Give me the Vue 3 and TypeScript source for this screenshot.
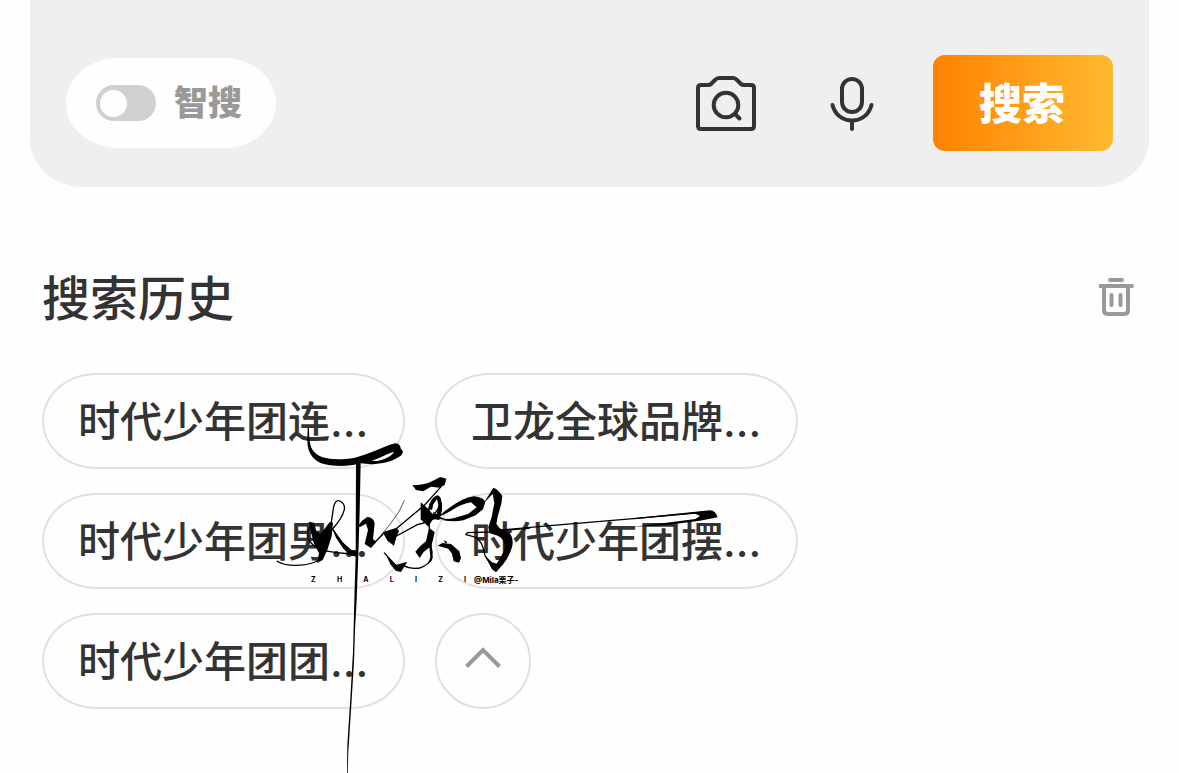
<script setup lang="ts">
import { ref } from 'vue'

const smart = ref<boolean>(false)
const history: string[] = ['时代少年团连...', '卫龙全球品牌...', '时代少年团男...', '时代少年团摆...', '时代少年团团...']
const letters: string[] = ['Z', 'H', 'A', 'L', 'I', 'Z', 'I']
</script>

<template>
  <main class="page">
    <header class="search-panel">
      <label class="smart">
        <input v-model="smart" class="switch" type="checkbox" role="switch" />
        <span>智搜</span>
      </label>
      <div class="actions">
        <button class="icon-btn camera" type="button" aria-label="拍照搜索">
          <svg width="60" height="60" viewBox="0 0 60 60" fill="none" stroke="#333" stroke-width="4" stroke-linecap="round" stroke-linejoin="round">
            <path d="M2 15Q2 12 5 12H12Q14 12 15 11L19 7Q21 5 23 5H37Q39 5 41 7L45 11Q46 12 48 12H55Q58 12 58 15V53Q58 56 55 56H5Q2 56 2 53Z" />
            <circle cx="30" cy="32" r="12.3" />
            <path d="M39 41L43.500 45.500" />
          </svg>
        </button>
        <button class="icon-btn mic" type="button" aria-label="语音搜索">
          <svg width="44" height="60" viewBox="0 0 44 60" fill="none" stroke="#333" stroke-width="4" stroke-linecap="round">
            <rect x="12" y="6" width="20" height="33" rx="10" />
            <path d="M2.500 32C5 42 13 47.500 22 47.500S39 42 41.500 32M22 48V56" />
          </svg>
        </button>
        <button class="submit" type="button">搜索</button>
      </div>
    </header>

    <section class="history">
      <div class="title-row">
        <h1>搜索历史</h1>
        <button class="icon-btn" type="button" aria-label="清空搜索历史">
          <svg width="38" height="40" viewBox="0 0 38 40" fill="none" stroke="#999" stroke-width="4" stroke-linecap="round" stroke-linejoin="round">
            <path d="M11 2H23M1 8H33M5 9V32Q5 36 9 36H25Q29 36 29 32V9M12.500 17V27M21.500 17V27" />
          </svg>
        </button>
      </div>
      <div class="chips">
        <button v-for="item in history" :key="item" class="chip" type="button">{{ item }}</button>
        <button class="chip fold" type="button" aria-label="收起">
          <svg width="36" height="24" viewBox="0 0 36 24" fill="none" stroke="#999" stroke-width="4">
            <path d="M1.500 20.500L18 4L34.500 20.500" />
          </svg>
        </button>
      </div>
    </section>

    <div class="signature">
      <svg class="ink" width="450" height="348" viewBox="0 0 1350 1044" aria-hidden="true">
        <g>
          <path d="M113 8L117 9C117 40 119 60 128 75C148 105 200 107 255 98C300 87 340 64 376 55Q391 57 392 70L399 80L395 90Q376 105 350 112C325 118 300 119 271 115C240 124 200 126 165 118C133 111 112 86 112 48Z" />
          <path class="gap" d="M304 107C330 101 348 86 372 81C366 93 345 103 322 108Z" />
          <path d="M258 112L272 112L269 260L265 390L260 525L255 615L252 710L244 840L235 980L233 1044H231L232 960L241 820L249 680L253 525L257 390Z" />
          <path d="M116 290L132 293L139 318L150 327L164 311L179 291L189 293L185 334L172 375L158 405L141 414L147 384L131 354Z" />
          <path class="line" d="M183 298L191 244Q198 222 210 228Q228 239 222 257Q216 280 190 309L174 332M187 311L218 355L260 391M20 408C48 426 102 424 135 411Q155 402 158 378M122 304C103 327 113 355 150 373C182 384 220 384 261 389" />
          <path d="M187 311L210 342L239 375L260 376V395L240 391L219 370L198 338Z" />
          <path d="M264 303L276 287L293 275Q313 279 314 296L309 342L319 351L303 369L284 357L294 314L288 296L270 306Z" />
          <path class="line" d="M304 363L340 326" />
          <path class="hair" d="M330 335L363 294Q391 260 403 226" />
        </g>
        <g transform="translate(330 120)">
          <path d="M97 61Q132 60 153 50L181 36L199 41L194 60L178 68L153 65L129 79L108 75Z" />
          <path class="line" d="M184 64L134 120L37 201M44 216L112 179C150 172 182 151 211 134M145 175L177 127Q188 97 171 93Q153 100 147 130L148 208M160 142Q176 167 220 164Q267 160 305 125" />
          <path d="M165 95Q178 88 184 108Q189 126 183 150L170 149L175 119L171 102L160 118L156 135L145 132Q150 104 165 95Z" />
          <path d="M8 202L50 188L57 199L49 217L42 242L23 228Z" />
          <path d="M122 112L146 133L157 146L184 147L178 165L159 162L145 185L134 174L122 163Z" />
          <path d="M190 142Q245 98 282 94Q311 97 316 111L309 133L287 151L250 166Q218 172 187 165L220 160L264 147L290 127L273 112Q237 119 211 139L186 151Z" />
          <path d="M148 190L164 201L159 225L153 244L131 261L119 279L106 260L122 242L138 229L143 207Z" />
          <path class="line" d="M151 225L156 279Q146 300 119 309Q90 313 72 302M12 263L48 302L78 294" />
          <path d="M151 225L158 260L156 285L143 298L151 277L148 244Z" />
          <path d="M17 267L31 282L52 303L82 290L63 321L47 317L31 298Z" />
          <path d="M173 242L187 234L213 237L238 259L243 279L237 293L221 289L216 266L205 251Z" />
          <path d="M193 226L199 229L201 235L194 233Z" />
          <path d="M309 118L340 68Q354 72 367 93L364 116L353 155L349 177L359 190L387 202Q403 221 396 247Q387 276 370 297L348 322L336 313L315 272L336 292L350 296L371 260Q381 225 353 212L328 204L325 187L335 156L343 114L338 87L326 99Z" />
          <path class="line" d="M340 310L315 272Q308 227 287 218M291 218L258 209L262 203L330 201L450 189" />
        </g>
        <g transform="translate(690 195)">
          <path class="line" d="M0 120L150 107L400 86L625 65" />
          <path d="M400 85L630 61Q646 61 653 82L600 92L500 105L400 110L500 98L586 87L600 78L586 71L400 88Z" />
        </g>
      </svg>
      <div class="caption">
        <span class="latin"><span v-for="(letter, i) in letters" :key="i">{{ letter }}</span></span>
        <span>@Mila栗子-</span>
      </div>
    </div>
  </main>
</template>

<style>
body {
  margin: 0;
  background: #fefefe;
}
</style>

<style scoped>
.page {
  position: relative;
  overflow: hidden;
  padding-bottom: 64px;
  font-family: Inter, "Noto Sans CJK SC", sans-serif;
  color: #333;
}

button {
  margin: 0;
  padding: 0;
  border: 0;
  background: none;
  font-family: inherit;
  color: inherit;
  cursor: pointer;
}

svg {
  display: block;
}

.search-panel {
  display: flex;
  align-items: center;
  justify-content: space-between;
  margin: 0 30px;
  padding: 55px 36px 36px;
  border-radius: 0 0 52px 52px / 0 0 48px 48px;
  background: #efefef;
}

.smart {
  display: flex;
  align-items: center;
  gap: 18px;
  box-sizing: border-box;
  height: 90px;
  padding: 0 34px 0 30px;
  border-radius: 52px / 45px;
  background: #fefefe;
  color: #999;
  font-size: 34px;
  font-weight: 900;
  line-height: 48px;
}

.switch {
  appearance: none;
  display: flex;
  align-items: center;
  box-sizing: border-box;
  width: 60px;
  height: 36px;
  margin: 0;
  padding: 0 4px;
  border-radius: 18px;
  background: #d0d0d0;
}

.switch::before {
  content: "";
  width: 27px;
  height: 27px;
  border-radius: 50%;
  background: #fefefe;
}

.switch:checked {
  justify-content: flex-end;
  background: #ff8200;
}

.actions {
  display: flex;
  align-items: center;
}

.camera {
  margin-right: 74px;
}

.mic {
  margin-right: 59px;
}

.submit {
  width: 180px;
  height: 96px;
  padding: 2px 2px 0 0;
  border-radius: 12px;
  background: linear-gradient(90deg, #ff8200, #ffba30);
  color: #fff;
  font-size: 43px;
  font-weight: 900;
  line-height: 64px;
}

.history {
  padding: 75px 42px 0;
}

.title-row {
  display: flex;
  align-items: center;
  justify-content: space-between;
  height: 72px;
}

h1 {
  margin: 0;
  padding-top: 2px;
  font-size: 48px;
  font-weight: 500;
  line-height: 72px;
}

.chips {
  display: flex;
  flex-wrap: wrap;
  gap: 24px 30px;
  max-width: 760px;
  margin-top: 39px;
}

.chip {
  box-sizing: border-box;
  width: 363px;
  height: 96px;
  padding: 2px 34px 0;
  border: 2px solid #e0e0e0;
  border-radius: 54px / 48px;
  font-size: 42px;
  font-weight: 500;
  line-height: 60px;
  text-align: left;
  white-space: nowrap;
}

.fold {
  display: flex;
  align-items: center;
  justify-content: center;
  width: 96px;
  padding: 0 0 6px;
  border-radius: 50%;
}

.signature {
  position: absolute;
  top: 425px;
  left: 270px;
  color: #000;
  pointer-events: none;
}

.line,
.hair {
  fill: none;
  stroke: #000;
  stroke-width: 4;
}

.hair {
  stroke-width: 2;
}

.gap {
  fill: #fefefe;
}

.caption {
  position: absolute;
  top: 149px;
  left: 41px;
  display: flex;
  gap: 8px;
  font-size: 8px;
  font-weight: 700;
  line-height: 12px;
  white-space: nowrap;
}

.latin {
  display: flex;
  justify-content: space-between;
  width: 155px;
  font-size: 7px;
}
</style>
